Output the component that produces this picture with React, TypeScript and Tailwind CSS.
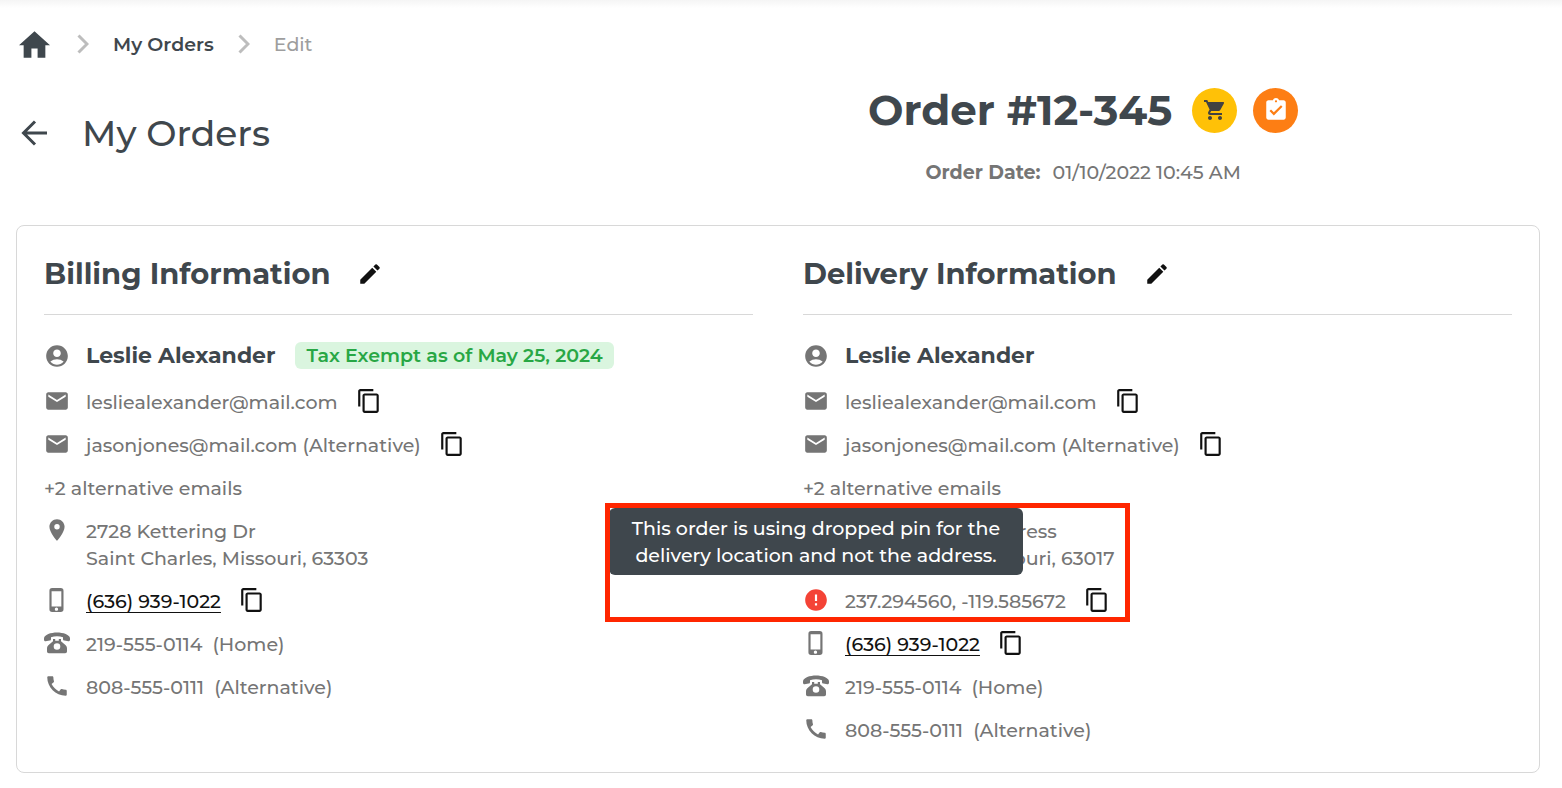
import type { ReactNode } from "react";
import {
  MdAccountCircle,
  MdAssignmentTurnedIn,
  MdCall,
  MdContentCopy,
  MdEdit,
  MdEmail,
  MdError,
  MdLocationOn,
  MdPhoneIphone,
  MdShoppingCart,
} from "react-icons/md";

function HomeIcon() {
  return (
    <svg viewBox="2 3 20 17" className="h-[27px] w-[31px]" fill="currentColor" aria-hidden="true">
      <path d="M10 20v-6h4v6h5v-8h3L12 3 2 12h3v8z" />
    </svg>
  );
}

function Chevron() {
  return (
    <svg viewBox="0 0 12 20" className="h-5 w-3 shrink-0" fill="none" stroke="#bdbdbd" strokeWidth="3" aria-hidden="true">
      <path d="M1.5 1.5 10 10l-8.500 8.500" />
    </svg>
  );
}

function BackIcon() {
  return (
    <svg viewBox="0 0 26 26" className="size-[26px]" fill="none" stroke="currentColor" strokeWidth="3" aria-hidden="true">
      <path d="M26 13H3M14 1.500 2.500 13 14 24.500" />
    </svg>
  );
}

function ClassicPhone() {
  return (
    <svg viewBox="0 0 26 22" className="h-[22px] w-[26px]" fill="#757575" aria-hidden="true">
      <path d="M13 .5C7 .5 0 2.600 0 6.500v1.200c0 1 .8 1.600 1.700 1.500l3.800-.6c.9-.1 1.500-.8 1.500-1.700V5.200c3.600-1.200 8.400-1.200 12 0v1.700c0 .9.6 1.600 1.500 1.700l3.800.6c.9.1 1.700-.5 1.700-1.500V6.500C26 2.600 19 .5 13 .5Z" />
      <path
        fillRule="evenodd"
        d="M9 7v2.200L4.600 13C3.600 13.900 3 15.100 3 16.500V19.500A1.800 1.800 0 0 0 4.800 21.300H21.200A1.800 1.800 0 0 0 23 19.500V16.500C23 15.100 22.400 13.900 21.400 13L17 9.200V7H14.800V8.800H11.200V7ZM13 11.200a3.300 3.300 0 1 1 0 6.600 3.300 3.300 0 0 1 0-6.600Z"
      />
    </svg>
  );
}

function CopyButton({ label }: { label: string }) {
  return (
    <button type="button" aria-label={label} className="ml-[18px] flex h-6 cursor-pointer items-center text-[#111]">
      <MdContentCopy className="size-[26px]" />
    </button>
  );
}

function Row({ icon, children }: { icon: ReactNode; children: ReactNode }) {
  return (
    <li className="flex items-start">
      <span className="mr-4 flex h-6 w-[26px] shrink-0 items-center justify-center text-[#757575]">{icon}</span>
      {children}
    </li>
  );
}

function Emails() {
  return (
    <>
      <Row icon={<MdEmail className="size-[26px]" />}>
        <span>lesliealexander@mail.com</span>
        <CopyButton label="Copy email" />
      </Row>
      <Row icon={<MdEmail className="size-[26px]" />}>
        <span>jasonjones@mail.com (Alternative)</span>
        <CopyButton label="Copy alternative email" />
      </Row>
      <li>+2 alternative emails</li>
    </>
  );
}

function Phones() {
  return (
    <>
      <Row icon={<MdPhoneIphone className="size-[26px]" />}>
        <a href="tel:+16369391022" className="text-[#111] underline decoration-1 underline-offset-4">
          (636) 939-1022
        </a>
        <CopyButton label="Copy phone number" />
      </Row>
      <Row icon={<ClassicPhone />}>
        <span>219-555-0114</span>
        <span className="ml-[10px]">(Home)</span>
      </Row>
      <Row icon={<MdCall className="size-[26px]" />}>
        <span>808-555-0111</span>
        <span className="ml-[10px]">(Alternative)</span>
      </Row>
    </>
  );
}

type PanelProps = { title: string; name: string; badge?: string; children: ReactNode };

function Panel({ title, name, badge, children }: PanelProps) {
  return (
    <section className="min-w-0">
      <div className="flex items-center gap-[27px] border-b border-[#d8d8d8] pb-[22px]">
        <h2 className="text-[29px] leading-9 font-bold text-[#3f474d]">{title}</h2>
        <button type="button" aria-label={`Edit ${title}`} className="cursor-pointer text-[#111]">
          <MdEdit className="size-[26px]" />
        </button>
      </div>
      <div className="mt-[27px] flex h-[27px] items-center">
        <MdAccountCircle className="mr-4 size-[26px] shrink-0 text-[#757575]" />
        <h3 className="text-[22px] leading-[27px] font-bold text-[#3f474d]">{name}</h3>
        {badge && (
          <span className="ml-5 rounded-md bg-[#daf5df] px-[11px] font-semibold text-[#28a745]">{badge}</span>
        )}
      </div>
      <ul className="mt-5 flex flex-col gap-4">{children}</ul>
    </section>
  );
}

export default function App() {
  return (
    <div className="bg-white px-4 pb-4 font-['Montserrat','Inter',sans-serif] text-[19px] leading-[27px] font-medium text-[#757575]">
      <div className="-mx-4 h-2 bg-linear-to-b from-[#f5f5f5] to-white" />
      <nav aria-label="Breadcrumb" className="flex h-[72px] items-center gap-6">
        <a href="#home" aria-label="Home" className="px-[3px] text-[#3f474d]">
          <HomeIcon />
        </a>
        <Chevron />
        <a href="#orders" className="font-semibold text-[#3f474d]">My Orders</a>
        <Chevron />
        <span className="text-[#9e9e9e]">Edit</span>
      </nav>
      <header className="grid h-[145px] grid-cols-[39.5%_1fr] items-start">
        <div className="mt-[31px] flex items-center text-[#3f474d]">
          <button type="button" aria-label="Back" className="ml-[5px] cursor-pointer"><BackIcon /></button>
          <h1 className="ml-[35px] text-[36px] leading-[44px] font-medium">My Orders</h1>
        </div>
        <div className="flex flex-col items-center pt-1">
          <div className="flex items-center gap-4">
            <p className="mr-1 text-[42px] leading-[52px] font-bold text-[#3f474d]">Order #12-345</p>
            <span className="flex size-[45px] items-center justify-center rounded-full bg-[#ffc107] text-[#424242]">
              <MdShoppingCart className="size-6" />
            </span>
            <span className="flex size-[45px] items-center justify-center rounded-full bg-[#fd7e14] text-white">
              <MdAssignmentTurnedIn className="size-[26px]" />
            </span>
          </div>
          <p className="mt-[23px]">
            <span className="mr-3 font-bold">Order Date:</span>
            <time dateTime="2022-01-10T10:45">01/10/2022 10:45 AM</time>
          </p>
        </div>
      </header>
      <main className="mr-[6px] grid grid-cols-2 gap-x-[50px] rounded-lg border border-[#d8d8d8] px-[27px] pt-[30px] pb-7">
        <Panel title="Billing Information" name="Leslie Alexander" badge="Tax Exempt as of May 25, 2024">
          <Emails />
          <Row icon={<MdLocationOn className="size-[26px]" />}>
            <address className="not-italic">
              2728 Kettering Dr
              <br />
              Saint Charles, Missouri, 63303
            </address>
          </Row>
          <Phones />
        </Panel>
        <Panel title="Delivery Information" name="Leslie Alexander">
          <Emails />
          <li className="relative">
            <ul className="flex flex-col gap-4">
              <Row icon={<MdLocationOn className="size-[26px]" />}>
                <address className="not-italic">
                  2728 Delivery Address
                  <br />
                  Chesterfield, Missouri, 63017
                </address>
              </Row>
              <Row
                icon={
                  <span className="relative flex">
                    <MdError className="size-[26px] text-[#f44336]" />
                    <span
                      role="tooltip"
                      className="absolute bottom-full left-1/2 mb-3 w-[414px] -translate-x-1/2 rounded-md bg-[#3f474d] px-4 pt-[7px] pb-[6px] text-center text-white"
                    >
                      This order is using dropped pin for the
                      <br />
                      delivery location and not the address.
                    </span>
                  </span>
                }
              >
                <span>237.294560, -119.585672</span>
                <CopyButton label="Copy coordinates" />
              </Row>
            </ul>
            <div className="pointer-events-none absolute -top-[15px] -left-[198px] h-[119px] w-[525px] border-5 border-[#ff2600]" />
          </li>
          <Phones />
        </Panel>
      </main>
    </div>
  );
}
